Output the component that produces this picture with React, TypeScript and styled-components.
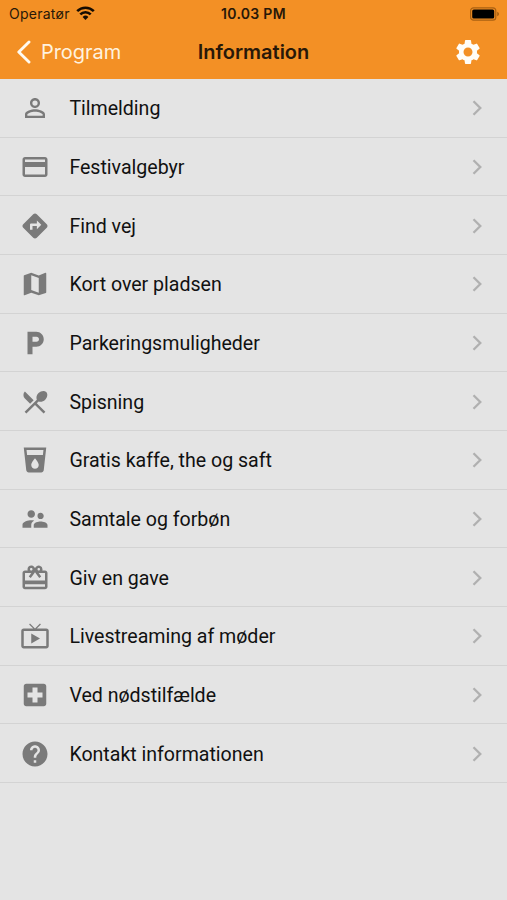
import React from 'react';
import styled, { createGlobalStyle } from 'styled-components';
import type { IconType } from 'react-icons';
import {
  MdPersonOutline,
  MdPayment,
  MdDirections,
  MdMap,
  MdLocalParking,
  MdLocalDining,
  MdLocalDrink,
  MdSupervisorAccount,
  MdRedeem,
  MdLiveTv,
  MdLocalHospital,
  MdHelp,
  MdSettings,
} from 'react-icons/md';

const GlobalStyle = createGlobalStyle`
  *, *::before, *::after { box-sizing: border-box; }
  body { margin: 0; background: #e4e4e4; }
`;

const Screen = styled.div`
  display: flex;
  flex-direction: column;
  width: 100%;
  height: 100vh;
  overflow: hidden;
  background: #e4e4e4;
  color: #111;
  font-family: Roboto, 'Liberation Sans', sans-serif;
`;

const Header = styled.header`
  flex: none;
  height: 79px;
  background: #f39025;
  font-family: Inter, 'Liberation Sans', sans-serif;
`;

const StatusBar = styled.div`
  display: grid;
  grid-template-columns: 1fr auto 1fr;
  align-items: center;
  height: 27px;
  padding: 0 8px;
  color: #281808;
`;

const Carrier = styled.div`
  display: flex;
  align-items: center;
  gap: 6px;
  padding-left: 1px;
  font-size: 14px;
  line-height: 18px;
  letter-spacing: 0.25px;

  svg { display: block; }
`;

const Clock = styled.div`
  font-size: 14px;
  font-weight: 600;
  line-height: 18px;
  letter-spacing: 0.3px;
`;

const BatterySlot = styled.div`
  display: flex;
  justify-content: flex-end;
`;

const NavBar = styled.nav`
  display: grid;
  grid-template-columns: 1fr auto 1fr;
  align-items: center;
  height: 50px;
  padding: 0 24px 0 16px;
`;

const BackButton = styled.button`
  display: flex;
  align-items: center;
  gap: 10px;
  padding: 0;
  border: 0;
  background: none;
  color: #fff2df;
  font: 400 20px/26px Inter, 'Liberation Sans', sans-serif;
  letter-spacing: -0.05px;
`;

const Title = styled.h1`
  margin: 0 0 0 8px;
  font-size: 20px;
  font-weight: 600;
  line-height: 26px;
  letter-spacing: 0;
  color: #281808;
`;

const SettingsButton = styled.button`
  display: flex;
  justify-self: end;
  padding: 0;
  border: 0;
  background: none;
  color: #fffdf8;
`;

const List = styled.ul`
  margin: 0;
  padding: 0;
  list-style: none;
`;

const Row = styled.li`
  display: grid;
  grid-template-columns: 30px 1fr 10px;
  column-gap: 19.4px;
  align-items: center;
  height: 58.66px;
  padding: 1px 25px 0 20px;
  border-bottom: 1px solid #d3d3d3;
`;

const RowIcon = styled.span`
  display: flex;
  color: #7a7a7a;
`;

const Label = styled.span`
  padding-top: 2px;
  font-size: 19.6px;
  line-height: 24px;
  letter-spacing: -0.02px;
  white-space: nowrap;
`;

const entries: { icon: IconType; label: string }[] = [
  { icon: MdPersonOutline, label: 'Tilmelding' },
  { icon: MdPayment, label: 'Festivalgebyr' },
  { icon: MdDirections, label: 'Find vej' },
  { icon: MdMap, label: 'Kort over pladsen' },
  { icon: MdLocalParking, label: 'Parkeringsmuligheder' },
  { icon: MdLocalDining, label: 'Spisning' },
  { icon: MdLocalDrink, label: 'Gratis kaffe, the og saft' },
  { icon: MdSupervisorAccount, label: 'Samtale og forbøn' },
  { icon: MdRedeem, label: 'Giv en gave' },
  { icon: MdLiveTv, label: 'Livestreaming af møder' },
  { icon: MdLocalHospital, label: 'Ved nødstilfælde' },
  { icon: MdHelp, label: 'Kontakt informationen' },
];

function Wifi() {
  return (
    <svg width="19" height="15" viewBox="0 0 19 15" fill="none" stroke="#150c02" strokeWidth="2.6">
      <path d="M1.2 5.1a11.8 11.8 0 0 1 16.6 0" />
      <path d="M4.3 8.4a7.4 7.4 0 0 1 10.4 0" />
      <path d="M9.5 14 6.6 11a4.1 4.1 0 0 1 5.8 0z" fill="#150c02" stroke="none" />
    </svg>
  );
}

function Battery() {
  return (
    <svg width="30" height="14" viewBox="0 0 30 14">
      <rect x="1.6" y="0.8" width="25.2" height="12.4" rx="3" fill="none" stroke="#a96012" strokeWidth="1.2" />
      <rect x="3.2" y="2.4" width="22" height="9.2" rx="1.6" fill="#000" />
      <path d="M28.2 4.8c1.3.5 1.8 1.2 1.8 2.2s-.5 1.7-1.8 2.2z" fill="#a96012" />
    </svg>
  );
}

function BackChevron() {
  return (
    <svg width="15" height="24" viewBox="0 0 15 24" fill="none" stroke="#fffaf0" strokeWidth="2.9" strokeLinecap="round" strokeLinejoin="round">
      <path d="M13 2 2.8 12 13 22" />
    </svg>
  );
}

function RowChevron() {
  return (
    <svg width="10" height="16" viewBox="0 0 10 16" fill="none" stroke="#b0b0b0" strokeWidth="2.3">
      <path d="m1.5 1.2 6.8 6.8-6.8 6.8" />
    </svg>
  );
}

export default function App() {
  return (
    <>
      <GlobalStyle />
      <Screen>
        <Header>
          <StatusBar>
            <Carrier>
              Operatør
              <Wifi />
            </Carrier>
            <Clock>10.03 PM</Clock>
            <BatterySlot>
              <Battery />
            </BatterySlot>
          </StatusBar>
          <NavBar>
            <BackButton>
              <BackChevron />
              Program
            </BackButton>
            <Title>Information</Title>
            <SettingsButton aria-label="Indstillinger">
              <MdSettings size={30} />
            </SettingsButton>
          </NavBar>
        </Header>
        <List>
          {entries.map(({ icon: Icon, label }) => (
            <Row key={label}>
              <RowIcon>
                <Icon size={30} />
              </RowIcon>
              <Label>{label}</Label>
              <RowChevron />
            </Row>
          ))}
        </List>
      </Screen>
    </>
  );
}
